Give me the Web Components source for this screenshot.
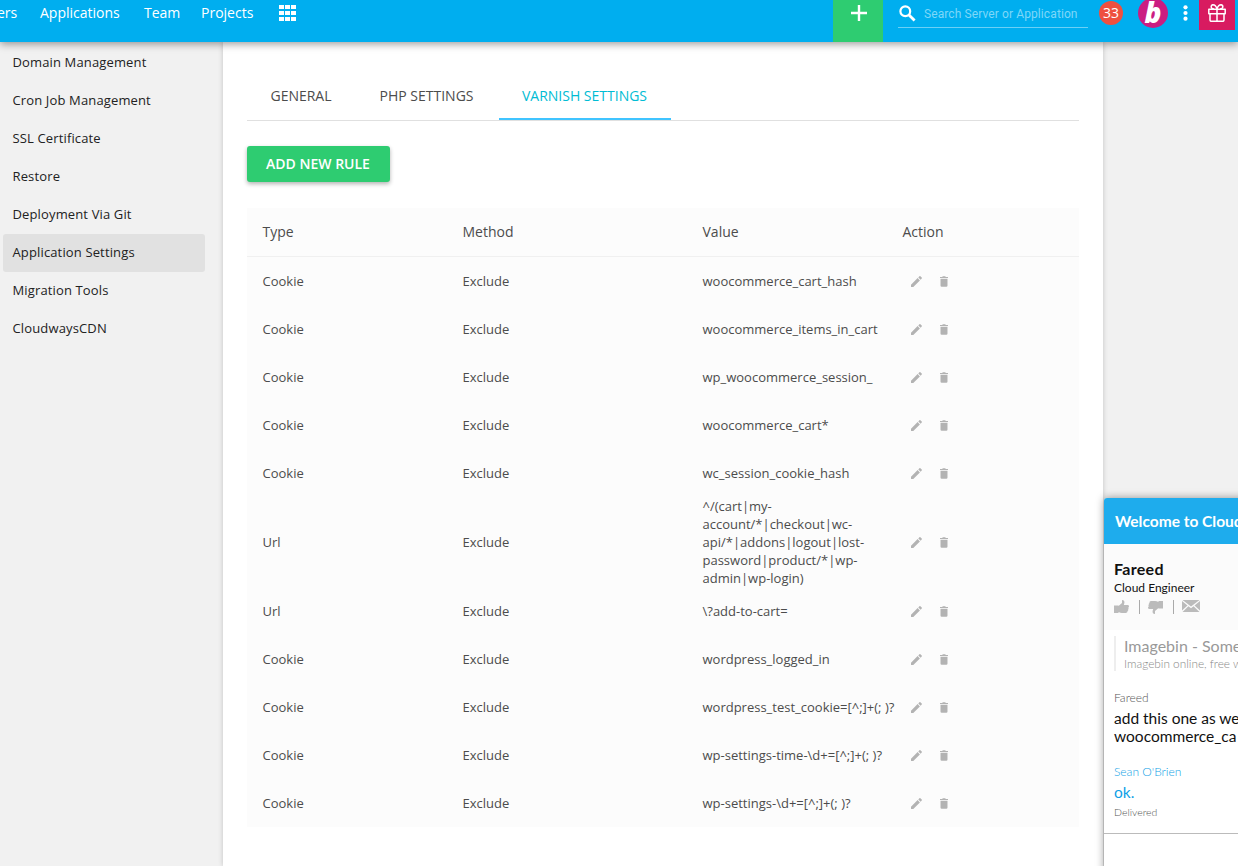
<!DOCTYPE html>
<html lang="en">
<head>
<meta charset="utf-8">
<title>Application Settings</title>
<style>
  body {
    margin: 0;
    height: 866px;
    overflow: hidden;
    background: #f1f1f1;
    font-family: "Open Sans", "Liberation Sans", sans-serif;
    font-size: 13px;
    color: #4c4c4c;
  }
</style>
</head>
<body>

<app-page>
  <top-bar slot="header"></top-bar>
  <side-menu slot="menu">
    <side-item>Domain Management</side-item>
    <side-item>Cron Job Management</side-item>
    <side-item>SSL Certificate</side-item>
    <side-item>Restore</side-item>
    <side-item>Deployment Via Git</side-item>
    <side-item active>Application Settings</side-item>
    <side-item>Migration Tools</side-item>
    <side-item>CloudwaysCDN</side-item>
  </side-menu>
  <settings-tabs>
    <settings-tab style="width: 108px">GENERAL</settings-tab>
    <settings-tab style="width: 143px">PHP SETTINGS</settings-tab>
    <settings-tab style="width: 172px; margin-left: 1px" active>VARNISH SETTINGS</settings-tab>
  </settings-tabs>
  <raised-button>ADD NEW RULE</raised-button>
  <rule-table></rule-table>
  <chat-window slot="chat"></chat-window>
</app-page>

<script>
class BaseElement extends HTMLElement {

  constructor() {

    super();
    this.attachShadow({ mode: 'open' });
  }

  connectedCallback() {

    this.shadowRoot.innerHTML = `${this.getStyle()}${this.getMarkup()}`;
  }
}

class AppPage extends BaseElement {

  getMarkup() {

    return `
      <slot name="header"></slot>
      <div class="body">
        <slot name="menu"></slot>
        <main><slot></slot></main>
      </div>
      <slot name="chat"></slot>
    `;
  }

  getStyle() {

    return `
      <style>
        :host {
          display: flex;
          flex-direction: column;
          position: relative;
          height: 866px;
          overflow: hidden;
        }
        .body {
          display: flex;
          flex: 1;
        }
        main {
          box-sizing: border-box;
          width: 880px;
          padding: 30px 24px 0;
          background: #fff;
          box-shadow: 0 0 5px rgba(0, 0, 0, .2);
        }
      </style>
    `;
  }
}

class TopBar extends BaseElement {

  getMarkup() {

    return `
      <nav>
        <a style="width: 43px">ers</a>
        <a style="width: 104px">Applications</a>
        <a style="width: 57px">Team</a>
        <a style="width: 79px">Projects</a>
        <svg width="17" height="16" viewBox="0 0 17 16" fill="#fff">
          <path d="M0 0h5v4H0zM6 0h5v4H6zM12 0h5v4h-5zM0 6h5v4H0zM6 6h5v4H6zM12 6h5v4h-5zM0 12h5v4H0zM6 12h5v4H6zM12 12h5v4h-5z"/>
        </svg>
      </nav>
      <div class="add">
        <svg width="16" height="16" viewBox="0 0 16 16"><path d="M8 0v16M0 8h16" stroke="#fff" stroke-width="2.4"/></svg>
      </div>
      <div class="search">
        <svg width="17" height="17" viewBox="0 0 17 17" fill="none" stroke="#fff">
          <circle cx="6.3" cy="6.3" r="4.9" stroke-width="2.2"/><path d="M10 10l5.6 5.6" stroke-width="2.8"/>
        </svg>
        <span>Search Server or Application</span>
      </div>
      <div class="count">33</div>
      <div class="avatar"><b>b</b></div>
      <svg class="dots" width="5" height="16" viewBox="0 0 5 16" fill="#fff">
        <circle cx="2.5" cy="2.3" r="2.1"/><circle cx="2.5" cy="8" r="2.1"/><circle cx="2.5" cy="13.7" r="2.1"/>
      </svg>
      <div class="gift">
        <svg width="18" height="18" viewBox="0 0 18 18" fill="none" stroke="#fff" stroke-width="1.5" stroke-linejoin="round">
          <path d="M.8 5.2h16.4v4.6H.8zM2 9.8v6.3q0 1.2 1.2 1.2h11.6q1.2 0 1.2-1.2V9.8M9 5v12.3"/>
          <path d="M9 5Q7.8.8 5 .8 3 1 3.2 3 3.5 5 6 5M9 5Q10.2.8 13 .8 15 1 14.8 3 14.5 5 12 5"/>
        </svg>
      </div>
    `;
  }

  getStyle() {

    return `
      <style>
        :host {
          display: flex;
          flex: none;
          align-items: flex-start;
          position: relative;
          z-index: 2;
          height: 42px;
          background: #00aeef;
          box-shadow: 0 2px 8px rgba(0, 0, 0, .4);
          color: #fff;
        }
        nav {
          display: flex;
          align-items: center;
          box-sizing: border-box;
          width: 833px;
          height: 26px;
          margin-left: -3px;
          margin-right: 3px;
          font-size: 14px;
          font-weight: 500;
        }
        nav svg {
          margin-left: -1px;
        }
        nav a {
          flex: none;
          line-height: 24px;
          padding-bottom: 0;
          white-space: nowrap;
        }
        .add {
          display: flex;
          justify-content: center;
          box-sizing: border-box;
          width: 50px;
          height: 42px;
          padding: 5px 0 0 2px;
          background: #2ecc71;
        }
        .search {
          display: flex;
          align-items: center;
          gap: 8px;
          box-sizing: border-box;
          width: 190px;
          height: 28px;
          margin-left: 15px;
          padding-left: 1px;
          border-bottom: 1px solid #6bd0f6;
          color: #7ed7f8;
          font: 12px Roboto, sans-serif;
          letter-spacing: .1px;
          white-space: nowrap;
        }
        .count {
          width: 24px;
          margin: 1px 0 0 11px;
          border-radius: 50%;
          background: #ee5040;
          font-size: 14px;
          line-height: 24px;
          text-align: center;
        }
        .avatar {
          width: 30px;
          height: 30px;
          margin: -2px 0 0 15px;
          border-radius: 50%;
          background: #cb1d81;
          font: italic 28px/28px "Open Sans", sans-serif;
          text-align: center;
        }
        .avatar b {
          font-weight: 800;
        }
        .dots {
          margin: 5px 11.5px 0 14.5px;
        }
        .gift {
          display: flex;
          align-items: center;
          justify-content: center;
          box-sizing: border-box;
          width: 36px;
          height: 30px;
          padding-bottom: 4px;
          background: #d81b60;
        }
      </style>
    `;
  }
}

class SideMenu extends BaseElement {

  getMarkup() {

    return '<slot></slot>';
  }

  getStyle() {

    return `
      <style>
        :host {
          display: block;
          box-sizing: border-box;
          width: 223px;
          padding: 2px 18px 0 3px;
        }
      </style>
    `;
  }
}

class SideItem extends BaseElement {

  getMarkup() {

    return '<slot></slot>';
  }

  getStyle() {

    return `
      <style>
        :host {
          display: block;
          height: 38px;
          padding-left: 9.5px;
          border-radius: 3px;
          color: #222;
          letter-spacing: .14px;
          line-height: 37px;
        }
        :host([active]) {
          background: #e1e1e1;
        }
      </style>
    `;
  }
}

class SettingsTabs extends BaseElement {

  getMarkup() {

    return '<slot></slot>';
  }

  getStyle() {

    return `
      <style>
        :host {
          display: flex;
          height: 48px;
          border-bottom: 1px solid #e0e0e0;
        }
      </style>
    `;
  }
}

class SettingsTab extends BaseElement {

  getMarkup() {

    return '<slot></slot>';
  }

  getStyle() {

    return `
      <style>
        :host {
          box-sizing: border-box;
          height: 48px;
          border-bottom: 2px solid transparent;
          font-size: 14px;
          line-height: 48px;
          text-align: center;
          white-space: nowrap;
        }
        :host([active]) {
          padding-right: 1px;
          border-color: #40c4ff;
          color: #00bcd4;
        }
      </style>
    `;
  }
}

class RaisedButton extends BaseElement {

  getMarkup() {

    return '<slot></slot>';
  }

  getStyle() {

    return `
      <style>
        :host {
          display: block;
          box-sizing: border-box;
          width: 143px;
          margin: 25px 0 26px;
          padding-right: 1px;
          border-radius: 3px;
          background: #2ecc71;
          box-shadow: 0 2px 4px rgba(0, 0, 0, .3);
          color: #fff;
          font-size: 14px;
          font-weight: 600;
          line-height: 36px;
          text-align: center;
          white-space: nowrap;
        }
      </style>
    `;
  }
}

class RuleActions extends BaseElement {

  getMarkup() {

    return `
      <svg width="11" height="11" viewBox="0 0 11 11"><path d="M0 8.7 6.6 2.1 8.9 4.4 2.3 11H0zM7.3 1.4 8.4.3q.5-.5 1 0l1.3 1.3q.5.5 0 1L9.6 3.7z"/></svg>
      <svg width="8" height="11" viewBox="0 0 8 11"><path d="M0 .9h2.2L2.8.2h2.4l.6.7H8V2H0zM.5 2.8h7v6.7q0 1.200-1.200 1.200H1.700Q.5 10.700.5 9.500z"/></svg>
    `;
  }

  getStyle() {

    return `
      <style>
        :host {
          display: flex;
          align-items: center;
          gap: 18px;
          padding-left: 8.5px;
          fill: #b3b3b3;
        }
      </style>
    `;
  }
}

class RuleTable extends BaseElement {

  get rules() {

    return [
      ['Cookie', 'woocommerce_cart_hash'],
      ['Cookie', 'woocommerce_items_in_cart'],
      ['Cookie', 'wp_woocommerce_session_'],
      ['Cookie', 'woocommerce_cart*'],
      ['Cookie', 'wc_session_cookie_hash'],
      ['Url', '^/(cart|my-<br>account/*|checkout|wc-<br>api/*|addons|logout|lost-<br>password|product/*|wp-<br>admin|wp-login)'],
      ['Url', '\\?add-to-cart='],
      ['Cookie', 'wordpress_logged_in'],
      ['Cookie', 'wordpress_test_cookie=[^;]+(; )?'],
      ['Cookie', 'wp-settings-time-\\d+=[^;]+(; )?'],
      ['Cookie', 'wp-settings-\\d+=[^;]+(; )?']
    ];
  }

  getMarkup() {

    return `
      <div class="row head"><span>Type</span><span>Method</span><span>Value</span><span>Action</span></div>
      ${this.rules.map(([type, value]) => `
        <div class="row">
          <span>${type}</span><span>Exclude</span><span>${value}</span><rule-actions></rule-actions>
        </div>
      `).join('')}
    `;
  }

  getStyle() {

    return `
      <style>
        :host {
          display: block;
          background: #fcfcfc;
        }
        .row {
          display: grid;
          grid-template-columns: 200px 240px 200px 1fr;
          align-items: center;
          min-height: 48px;
          padding-left: 15.5px;
          line-height: 18px;
          white-space: nowrap;
        }
        .head {
          border-bottom: 1px solid #f0f0f0;
          font-size: 14px;
        }
      </style>
    `;
  }
}

class ChatWindow extends BaseElement {

  getMarkup() {

    return `
      <header>Welcome to Cloud</header>
      <section class="agent">
        <h2>Fareed</h2>
        <p>Cloud Engineer</p>
        <div class="tools">
          <svg width="15" height="14" viewBox="0 0 15 14"><path d="M0 5.5h4.500V13H0zM4.500 6 8 3V0q2.800 0 2.400 3L9.800 5H14q1 .2 1 1.400 0 .8-.8 1.100.8.700 0 2 .3 1-.6 1.600.1 1.700-1.600 1.900H8q-1.500 0-3.500-1z"/></svg>
          <i></i>
          <svg width="15" height="14" viewBox="0 0 15 14"><path d="M15 8.500h-4.500V1H15zM10.500 8 7 11v3q-2.800 0-2.400-3l.6-2H1Q0 8.800 0 7.600q0-.8.8-1.100-.8-.7 0-2-.3-1 .6-1.600Q1.300 1.200 3 1h4q1.500 0 3.500 1z"/></svg>
          <i></i>
          <svg class="mail" width="18" height="12" viewBox="0 0 18 12"><path d="M.5 0h17L9 6.500zM0 1l5.500 4.500L0 10.500zM18 1l-5.500 4.500 5.500 5zM6.400 6.200 9 8.200l2.600-2L17.500 12H.5z"/></svg>
        </div>
      </section>
      <section class="log">
        <blockquote><div>Imagebin - Some</div><small>Imagebin online, free w</small></blockquote>
        <div class="name">Fareed</div>
        <div class="text">add this one as we<br>woocommerce_ca</div>
        <div class="name me">Sean O'Brien</div>
        <div class="text me">ok.</div>
        <div class="state">Delivered</div>
      </section>
    `;
  }

  getStyle() {

    return `
      <style>
        :host {
          position: absolute;
          z-index: 3;
          left: 1104px;
          top: 498px;
          width: 300px;
          height: 400px;
          border-radius: 3px 3px 0 0;
          background: #fff;
          box-shadow: 0 0 8px rgba(0, 0, 0, .4);
          color: #111;
          font-family: Lato, sans-serif;
          white-space: nowrap;
        }
        header {
          padding-left: 11px;
          border-radius: 3px 3px 0 0;
          background: #1eaced;
          color: #fff;
          font-size: 15.5px;
          font-weight: 700;
          line-height: 46px;
        }
        .agent {
          box-sizing: border-box;
          height: 86px;
          padding: 15px 10px 0;
          background: #fbfbfb;
        }
        h2 {
          margin: 0 0 1px;
          font-size: 16px;
          font-weight: 700;
          letter-spacing: .3px;
          line-height: 19px;
        }
        p {
          margin: 0;
          font-size: 12px;
          line-height: 18px;
        }
        .tools {
          display: flex;
          align-items: center;
          height: 20px;
          fill: #bbb;
        }
        .tools i {
          width: 1px;
          height: 14px;
          margin: 0 8px 0 10px;
          background: #aaa;
        }
        .mail {
          padding-bottom: 2px;
        }
        .log {
          box-sizing: border-box;
          height: 204px;
          padding: 6px 10px 0;
          border-bottom: 1px solid #bbb;
        }
        blockquote {
          margin: 0 0 18px;
          padding-left: 8px;
          border-left: 2px solid #eee;
          color: #999;
          font-size: 16px;
          line-height: 20px;
        }
        small {
          display: block;
          color: #888;
          font-size: 11.8px;
          font-weight: 300;
          line-height: 15px;
        }
        .name {
          color: #555;
          font-size: 12px;
          font-weight: 300;
          line-height: 18px;
        }
        .text {
          margin: 2px 0 18px;
          font-size: 15.5px;
          line-height: 18px;
        }
        .name.me,
        .text.me {
          color: #0f9fe6;
        }
        .text.me {
          margin-bottom: 2px;
        }
        .state {
          color: #555;
          font-size: 10.5px;
          font-weight: 300;
          line-height: 18px;
        }
      </style>
    `;
  }
}

customElements.define('app-page', AppPage);
customElements.define('top-bar', TopBar);
customElements.define('side-menu', SideMenu);
customElements.define('side-item', SideItem);
customElements.define('settings-tabs', SettingsTabs);
customElements.define('settings-tab', SettingsTab);
customElements.define('raised-button', RaisedButton);
customElements.define('rule-actions', RuleActions);
customElements.define('rule-table', RuleTable);
customElements.define('chat-window', ChatWindow);
</script>
</body>
</html>
